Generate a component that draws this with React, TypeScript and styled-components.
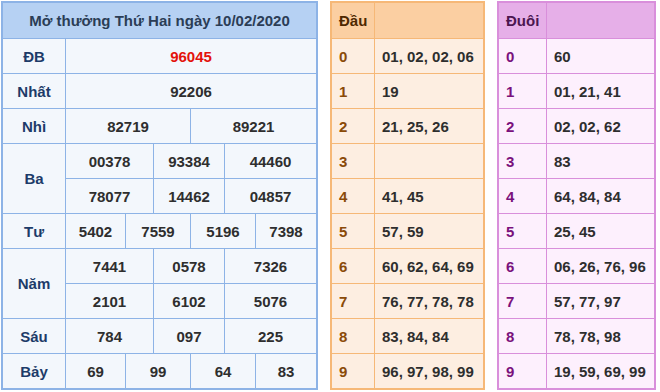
import { FC, Fragment } from 'react'
import styled, { createGlobalStyle } from 'styled-components'

const GlobalStyle = createGlobalStyle`
  body {
    margin: 0;
    background: #ffffff;
    font-family: 'Liberation Sans', Arial, sans-serif;
  }
`

const Page = styled.div`
  display: flex;
  align-items: flex-start;
  gap: 12px;
  padding: 1px;
`

const ResultGrid = styled.div`
  display: grid;
  grid-template-columns: 62px 59px 27px 36px 33px 30px 60px;
  grid-template-rows: 35px;
  grid-auto-rows: 34px;
  gap: 1px;
  background: #8db3e6;
  border: 2px solid #8db3e6;
`

const Cell = styled.div<{ span?: number; rows?: number }>`
  grid-column: span ${({ span }) => span ?? 1};
  grid-row: span ${({ rows }) => rows ?? 1};
  display: flex;
  align-items: center;
  justify-content: center;
  background: #f3f7fc;
  color: #2e2e2e;
  font-size: 15px;
  font-weight: 700;
`

const Title = styled(Cell)`
  background: #b6d1f3;
  color: #2b3d56;
`

const Label = styled(Cell)`
  color: #1d3b69;
`

const Special = styled(Cell)`
  color: #e3120b;
`

type Tone = 'orange' | 'purple'

const tones = {
  orange: { line: '#f6b877', head: '#fbcfa2', body: '#fdeee1', key: '#8a4a08', title: '#4e2800' },
  purple: { line: '#d98fdb', head: '#e6afe8', body: '#fdf0fd', key: '#7a117c', title: '#4b1650' },
}

const LotoGrid = styled.div<{ tone: Tone; keyWidth: number; valueWidth: number }>`
  display: grid;
  grid-template-columns: ${({ keyWidth, valueWidth }) => `${keyWidth}px ${valueWidth}px`};
  grid-template-rows: 35px;
  grid-auto-rows: 34px;
  gap: 1px;
  background: ${({ tone }) => tones[tone].line};
  border: 2px solid ${({ tone }) => tones[tone].line};
`

const LotoCell = styled.div<{ tone: Tone; head?: boolean; isKey?: boolean }>`
  display: flex;
  align-items: center;
  padding: 0 7px;
  background: ${({ tone, head }) => (head ? tones[tone].head : tones[tone].body)};
  color: ${({ tone, head, isKey }) => (head ? tones[tone].title : isKey ? tones[tone].key : '#2e2e2e')};
  font-size: 15px;
  font-weight: 700;
  white-space: nowrap;
`

const dau = [
  '01, 02, 02, 06',
  '19',
  '21, 25, 26',
  '',
  '41, 45',
  '57, 59',
  '60, 62, 64, 69',
  '76, 77, 78, 78',
  '83, 84, 84',
  '96, 97, 98, 99',
]

const duoi = [
  '60',
  '01, 21, 41',
  '02, 02, 62',
  '83',
  '64, 84, 84',
  '25, 45',
  '06, 26, 76, 96',
  '57, 77, 97',
  '78, 78, 98',
  '19, 59, 69, 99',
]

const LotoTable: FC<{ tone: Tone; title: string; rows: string[]; keyWidth: number; valueWidth: number }> = ({
  tone,
  title,
  rows,
  keyWidth,
  valueWidth,
}) => (
  <LotoGrid tone={tone} keyWidth={keyWidth} valueWidth={valueWidth}>
    <LotoCell tone={tone} head>
      {title}
    </LotoCell>
    <LotoCell tone={tone} head />
    {rows.map((value, i) => (
      <Fragment key={i}>
        <LotoCell tone={tone} isKey>
          {i}
        </LotoCell>
        <LotoCell tone={tone}>{value}</LotoCell>
      </Fragment>
    ))}
  </LotoGrid>
)

export default function App() {
  return (
    <Page>
      <GlobalStyle />
      <ResultGrid>
        <Title span={7}>Mở thưởng Thứ Hai ngày 10/02/2020</Title>

        <Label>ĐB</Label>
        <Special span={6}>96045</Special>

        <Label>Nhất</Label>
        <Cell span={6}>92206</Cell>

        <Label>Nhì</Label>
        <Cell span={3}>82719</Cell>
        <Cell span={3}>89221</Cell>

        <Label rows={2}>Ba</Label>
        <Cell span={2}>00378</Cell>
        <Cell span={2}>93384</Cell>
        <Cell span={2}>44460</Cell>
        <Cell span={2}>78077</Cell>
        <Cell span={2}>14462</Cell>
        <Cell span={2}>04857</Cell>

        <Label>Tư</Label>
        <Cell>5402</Cell>
        <Cell span={2}>7559</Cell>
        <Cell span={2}>5196</Cell>
        <Cell>7398</Cell>

        <Label rows={2}>Năm</Label>
        <Cell span={2}>7441</Cell>
        <Cell span={2}>0578</Cell>
        <Cell span={2}>7326</Cell>
        <Cell span={2}>2101</Cell>
        <Cell span={2}>6102</Cell>
        <Cell span={2}>5076</Cell>

        <Label>Sáu</Label>
        <Cell span={2}>784</Cell>
        <Cell span={2}>097</Cell>
        <Cell span={2}>225</Cell>

        <Label>Bảy</Label>
        <Cell>69</Cell>
        <Cell span={2}>99</Cell>
        <Cell span={2}>64</Cell>
        <Cell>83</Cell>
      </ResultGrid>

      <LotoTable tone="orange" title="Đầu" rows={dau} keyWidth={42} valueWidth={108} />
      <LotoTable tone="purple" title="Đuôi" rows={duoi} keyWidth={47} valueWidth={107} />
    </Page>
  )
}
